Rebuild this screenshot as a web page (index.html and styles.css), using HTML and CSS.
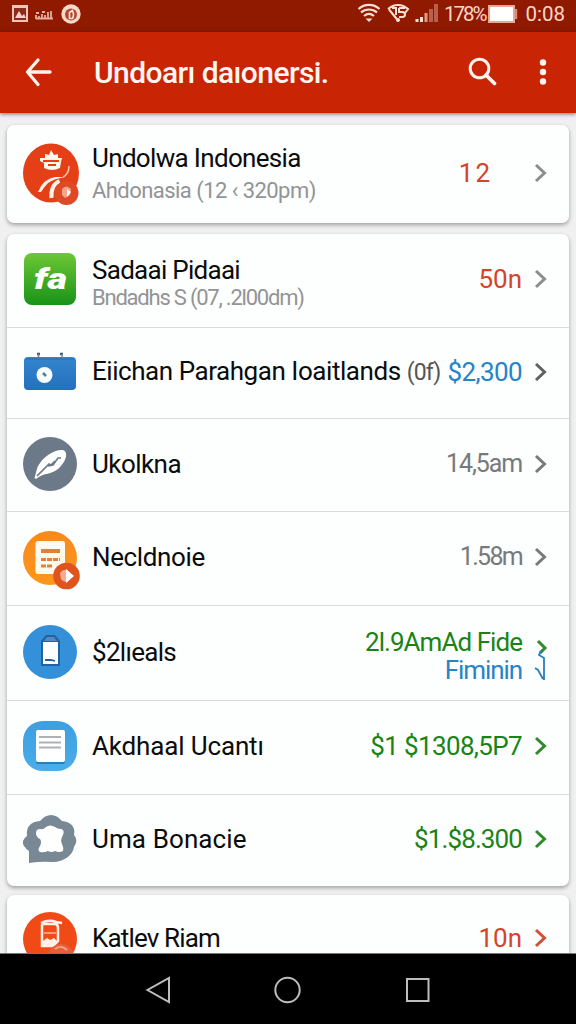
FILE: index.html
```html
<!DOCTYPE html>
<html lang="id">
<head>
<meta charset="utf-8">
<title>Undoarı daıonersi.</title>
<link rel="stylesheet" href="styles.css">
</head>
<body>
<div class="screen">
  <div class="status">
    <svg class="status-left" width="84" height="32" viewBox="0 0 84 32">
      <rect x="12" y="5" width="16" height="17" fill="#f2c4b9"/>
      <rect x="14" y="8" width="12" height="12" fill="#8a2a1a"/>
      <path d="M15 18l4-7 3 5 2-2 2 4z" fill="#f5cfc5"/>
      <path d="M36 19v-4m3 4v-3m3 3v-5m3 5v-4m3 4v-7m3 7v-8M36 13h3m3-1h3M36 18.500h17" stroke="#e6ac9e" stroke-width="1.800" fill="none"/>
      <circle cx="71" cy="14" r="9.700" fill="#f6d9c6"/>
      <circle cx="71" cy="14.500" r="6" fill="#b34932"/>
      <path d="M69.500 18.500v-6l3-2q2 5 0 8z" stroke="#fbe6d8" stroke-width="1.600" fill="none"/>
    </svg>
    <div class="status-right">
      <svg width="84" height="32" viewBox="0 0 84 32" fill="none" stroke="#ffdfd3">
        <path d="M1.500 9c6-5.500 15-5.500 21 0M4 12.500c4.500-4 11.500-4 16 0M7 16c3-2.500 7-2.500 10 0" stroke-width="2.200"/>
        <path d="M8.500 18.500h7l-3.500 3.500z" fill="#ffdfd3" stroke="none"/>
        <path d="M31 9c6-5.500 14-5.500 20 0l-3 4M32 9.500l9 11M35 8h4v7m3-7h6M42 8v4h3c4 0 4 5 0 5h-3" stroke-width="2"/>
        <circle cx="41" cy="20" r="2" fill="#ffdfd3" stroke="none"/>
        <path d="M60 22v-3m4.500 3v-5" stroke-width="3"/>
        <path d="M69 22v-9" stroke-width="3" stroke="#e39b87"/>
        <path d="M74 22v-13m5 13v-18" stroke-width="4" stroke="#b9604c"/>
      </svg>
      <span class="battery-text">178%</span>
      <svg class="battery" width="30" height="18" viewBox="0 0 30 18"><rect x="1" y="1" width="25" height="16" fill="#fff" stroke="#e8a898" stroke-width="2"/><path d="M28 4v10" stroke="#d98b78" stroke-width="2.500"/></svg>
      <span class="clock">0:08</span>
    </div>
  </div>
  <header class="bar">
    <svg class="back" width="28" height="30" viewBox="0 0 28 30" fill="none" stroke="#fff3ed" stroke-width="3.300" stroke-linecap="round" stroke-linejoin="round"><path d="M13 3L2.500 15 13 27.500M3 15h22"/></svg>
    <h1 class="title">Undoarı daıonersi.</h1>
    <svg class="search" width="30" height="30" viewBox="0 0 30 30" fill="none" stroke="#fff3ed" stroke-width="3"><circle cx="11.500" cy="11.500" r="9.300"/><path d="M18 18l8.500 8.500" stroke-width="3.800" stroke-linecap="round"/></svg>
    <svg class="more" width="8" height="28" viewBox="0 0 8 28" fill="#fff3ed"><circle cx="4" cy="4.500" r="3.200"/><circle cx="4" cy="14" r="3.200"/><circle cx="4" cy="23.500" r="3.200"/></svg>
  </header>
  <main class="list">
    <section class="card">
      <div class="row h98">
        <svg class="icon i1" width="60" height="68" viewBox="0 0 60 68">
          <ellipse cx="28" cy="32" rx="28" ry="29.500" fill="#e43f17"/>
          <path d="M17 17h5v-4l4 1 2-5 3 5 4-1v4h4l-1 4-1 6q-8 4-16 0v-5l-4-2z" fill="#fff6ef"/><path d="M20 20h16M25 24h8" stroke="#e43f17" stroke-width="2"/>
          <path d="M15 51q5-13 17-15h10q-12 2-17 6-4 4-7 9z" fill="#fff3e9"/><path d="M28.500 57q-1-13 8-17" fill="none" stroke="#fff3e9" stroke-width="4"/><path d="M46 25q0 8-6 11" fill="none" stroke="#ffc9b3" stroke-width="1.500"/>
          <circle cx="43.500" cy="52" r="12" fill="#df4925"/><path d="M39 48q4-5 9 0l-1 6-5 3-3-3z" fill="#f6a48a"/><path d="M44 48l4 3-4 5z" fill="#fff"/>
        </svg>
        <div class="copy c1"><div class="name n1">Undolwa Indonesia</div><div class="sub s1">Ahdonasia (12 ‹ 320pm)</div></div>
        <div class="value red v1">12</div>
        <svg class="chev grey" viewBox="0 0 14 20"><path d="M2 2l8.500 8L2 18"/></svg>
      </div>
    </section>
    <section class="card">
      <div class="row h94">
        <svg class="icon" width="60" height="56" viewBox="0 0 60 56">
          <defs><linearGradient id="leaf" x2="0" y2="1"><stop stop-color="#6dc735"/><stop offset="1" stop-color="#189318"/></linearGradient></defs>
          <rect x="1" y="2" width="52" height="52" rx="8" fill="url(#leaf)"/>
          <text x="11" y="38" class="logo-text" textLength="33" lengthAdjust="spacingAndGlyphs">fa</text>
        </svg>
        <div class="copy tight"><div class="name n2">Sadaai Pidaai</div><div class="sub s2">Bndadhs S (07, .2l00dm)</div></div>
        <div class="value red v2">50n</div>
        <svg class="chev grey" viewBox="0 0 14 20"><path d="M2 2l8.500 8L2 18"/></svg>
      </div>
      <div class="row h91">
        <svg class="icon" width="60" height="40" viewBox="0 0 60 40">
          <defs><linearGradient id="case" x2="0" y2="1"><stop stop-color="#3485ce"/><stop offset="1" stop-color="#2470bd"/></linearGradient></defs>
          <path d="M14 2h3M37 2h3" stroke="#405a70" stroke-width="2.500"/><path d="M15.500 2v4M39 2v4" stroke="#6f8ba2" stroke-width="1.500"/>
          <rect x="1" y="5" width="52" height="33" rx="4" fill="url(#case)"/><path d="M3 7h48" stroke="#286fb0"/>
          <circle cx="21.500" cy="23" r="8" fill="#f7fcff"/><path d="M20 21l3 3" stroke="#4c7fa4" stroke-width="2.500"/>
        </svg>
        <div class="copy"><div class="name n3">Eiichan Parahgan Ioaitlands <span class="count">(0f)</span></div></div>
        <div class="value blue v3">$2,300</div>
        <svg class="chev dark" viewBox="0 0 14 20"><path d="M2 2l8.500 8L2 18"/></svg>
      </div>
      <div class="row h93">
        <svg class="icon" width="60" height="56" viewBox="0 0 60 56">
          <circle cx="27" cy="28" r="27" fill="#6c7988"/>
          <path d="M11.500 42l3-11C20 20 32 13 40 14c6 2 3 12-5 19-7 6-13 3-22 10z" fill="#fff"/>
          <path d="M14 40L26 28l2 1 4-4M25 30l5-1 5-7h3" stroke="#6c7988" stroke-width="1.700" fill="none"/>
        </svg>
        <div class="copy"><div class="name n4">Ukolkna</div></div>
        <div class="value muted v4">14,5am</div>
        <svg class="chev mid" viewBox="0 0 14 20"><path d="M2 2l8.500 8L2 18"/></svg>
      </div>
      <div class="row h94">
        <svg class="icon i5" width="60" height="60" viewBox="0 0 60 60">
          <defs><linearGradient id="sun" x2="0" y2="1"><stop stop-color="#f58a1d"/><stop offset="1" stop-color="#ff961c"/></linearGradient></defs>
          <circle cx="27" cy="28" r="27" fill="url(#sun)"/><rect x="12.500" y="11" width="29.500" height="33" rx="2.500" fill="#fffaf0"/>
          <path d="M18 21h19" stroke="#e08136" stroke-width="4"/><path d="M18 29.500h19M18 36h12" stroke="#e08136" stroke-width="2.800" stroke-dasharray="5 1"/>
          <circle cx="43.500" cy="46" r="13.300" fill="#df531d"/><path d="M37 43q3-4 7-3v12q-4 0-6-3z" fill="#f5ad92"/><path d="M43 39l8 7-8 7z" fill="#fff"/>
        </svg>
        <div class="copy"><div class="name n5">Necldnoie</div></div>
        <div class="value muted v5">1.58m</div>
        <svg class="chev mid" viewBox="0 0 14 20"><path d="M2 2l8.500 8L2 18"/></svg>
      </div>
      <div class="row h95">
        <svg class="icon" width="60" height="56" viewBox="0 0 60 56">
          <circle cx="27" cy="28" r="27" fill="#3490d9"/>
          <path d="M18 17l5-6h9l5 6v25H18z" fill="#1e62a8"/><path d="M21 17l3-4h7l3 4z" fill="#5689ba"/><rect x="20" y="18" width="15" height="22" fill="#fff"/><path d="M22 36h6l4 1" stroke="#245e94" stroke-width="1.800" fill="none"/>
        </svg>
        <div class="copy"><div class="name n6">$2lıeals</div></div>
        <div class="value double"><div class="green v6">2l.9AmAd Fide</div><div class="blue v6b">Fiminin</div></div>
        <svg class="chev-pair" width="20" height="42" viewBox="0 0 20 42" fill="none"><path d="M4 2l7 7-5 5" stroke="#318a2b" stroke-width="3"/><path d="M7 12l-2 4 5 3v22M1 29l3 2 5 9" stroke="#277fc3" stroke-width="1.800"/></svg>
      </div>
      <div class="row h94">
        <svg class="icon" width="60" height="52" viewBox="0 0 60 52">
          <defs><linearGradient id="note" x2="0" y2="1"><stop stop-color="#3b9fe0"/><stop offset="1" stop-color="#4baee9"/></linearGradient></defs>
          <rect x="0" y="1" width="54" height="50" rx="20" fill="url(#note)"/><rect x="13" y="11" width="29" height="33" rx="2" fill="#287eb8"/><rect x="13" y="10" width="29" height="32" rx="2" fill="#fff"/>
          <path d="M16 17h22M16 22.500h22M16 27.500h22" stroke="#adb2b6" stroke-width="1.800"/>
        </svg>
        <div class="copy"><div class="name n7">Akdhaal Ucantı</div></div>
        <div class="value green v7">$1 $1308,5P7</div>
        <svg class="chev go" viewBox="0 0 14 20"><path d="M2 2l8.500 8L2 18"/></svg>
      </div>
      <div class="row h91">
        <svg class="icon" width="60" height="50" viewBox="0 0 60 50">
          <path d="M6 49V37Q-1 32 0 27q1-3 4-5C3 12 8 8 17 7q5-6 11-6 6 0 11 6c8 1 14 5 12 14q3 3 2 8l-2 4c-1 8-10 15-21 15Q18 47 6 49z" fill="#788895"/>
          <path d="M13 19q0-4 4-4 3 1 6-2 4-3 9 0 2 2 6 2 4 1 2 6-3 5-1 9 2 4 1 7-4 2-8 0-4 2-7 0-4 2-8 1-3-2 0-6 2-4 0-7-4-2-4-6z" fill="#fff"/>
        </svg>
        <div class="copy"><div class="name n8">Uma Bonacie</div></div>
        <div class="value green v8">$1.$8.300</div>
        <svg class="chev go" viewBox="0 0 14 20"><path d="M2 2l8.500 8L2 18"/></svg>
      </div>
    </section>
    <section class="card">
      <div class="row h88">
        <svg class="icon i9" width="60" height="56" viewBox="0 0 60 56">
          <circle cx="27" cy="28" r="27" fill="#f04b17"/><path d="M18 12q8-4 15-1l6 1M20 13h12q3 0 3 4v13l-5 5H19V14z" fill="none" stroke="#fff1e8" stroke-width="2.500"/><path d="M21 22h12" stroke="#ffb89e" stroke-width="1.500"/><path d="M20 30l4-3 3 2 4-2 3 3-5 5h-9z" fill="#fff1e8"/>
          <circle cx="38" cy="46" r="13" fill="#e7603b"/><path d="M32 38q6-5 12 1" stroke="#f7a286" stroke-width="2" fill="none"/>
        </svg>
        <div class="copy"><div class="name n9">Katlev Riam</div></div>
        <div class="value red v9">10n</div>
        <svg class="chev rust" viewBox="0 0 14 20"><path d="M2 2l8.500 8L2 18"/></svg>
      </div>
    </section>
  </main>
  <nav class="nav">
    <svg width="26" height="28" viewBox="0 0 26 28"><path d="M24 2v24L2.500 14z"/></svg>
    <svg width="28" height="28" viewBox="0 0 28 28"><circle cx="13.500" cy="14" r="12.200"/></svg>
    <svg width="26" height="28" viewBox="0 0 26 28"><rect x="2" y="3" width="21.500" height="22"/></svg>
  </nav>
</div>
</body>
</html>
```

FILE: styles.css
```css
* { box-sizing: border-box; }
body { margin: 0; font-family: Roboto, "Liberation Sans", sans-serif; }
svg { display: block; flex: none; }
.screen { width: 576px; height: 1024px; display: flex; flex-direction: column; overflow: hidden; background: #f0f0f1; }
.status { height: 32px; flex: none; background: #8f1a00; display: flex; justify-content: space-between; color: #ffd5c8; padding-right: 11px; }
.status-right { display: flex; align-items: center; font-size: 20.500px; line-height: 30px; height: 28px; }
.status-right > svg:first-child { align-self: flex-start; }
.battery-text { width: 43px; margin-left: 3px; letter-spacing: -2px; }
.battery { margin-left: 1px; }
.clock { width: 42px; margin-left: 5px; text-align: right; }
.bar { height: 81px; flex: none; display: flex; align-items: center; background: #c92504; padding: 0 29px 2px 25px; box-shadow: 0 1px 4px #0008; z-index: 1; }
.title { margin: 2px 0 0 41px; flex: 1; color: #fff6f2; font-size: 30px; font-weight: 500; line-height: 40px; white-space: nowrap; letter-spacing: -.58px; }
.search { margin-right: 41px; }
.list { flex: 1; min-height: 0; overflow: hidden; padding: 12px 7px 0; display: flex; flex-direction: column; gap: 10px; }
.card { flex: none; background: #fdfefe; border-radius: 7px; box-shadow: 0 2px 4px #0005; overflow: hidden; }
.card:nth-child(2) { margin-top: 1px; margin-bottom: -1px; }
.row { display: flex; align-items: center; padding: 0 21px 3px 16px; border-bottom: 1px solid #d9dbdc; }
.row:last-child { border-bottom: 0; }
.h88 { height: 88px; } .h91 { height: 91px; } .h93 { height: 93px; }
.h94 { height: 94px; } .h95 { height: 95px; } .h98 { height: 98px; }
.icon { margin-right: 9px; overflow: visible; }
.i1 { margin-top: 5px; }
.i5 { margin-top: 5px; }
.i9 { margin-top: 3px; }
.copy { flex: 1; min-width: 0; white-space: nowrap; }
.c1 { padding-top: 5px; }
.tight { padding-top: 5px; }
.name { font-size: 26px; line-height: 32px; color: #0b0c0c; }
.sub { font-size: 22px; line-height: 34px; color: #929495; }
.tight .sub { line-height: 24px; }
.n1 { letter-spacing: -.67px; }
.s1 { letter-spacing: -.55px; }
.n2 { letter-spacing: -.72px; }
.s2 { letter-spacing: -1.22px; }
.n3 { letter-spacing: -.45px; }
.count { color: #555; font-size: 23px; letter-spacing: -.8px; }
.n4 { letter-spacing: -.55px; }
.n5 { letter-spacing: -.38px; }
.n6 { letter-spacing: -.7px; }
.n7 { letter-spacing: -.15px; }
.n8 { letter-spacing: .1px; }
.n9 { letter-spacing: -.85px; }
.value { font-size: 26px; line-height: 32px; white-space: nowrap; margin-right: 12px; text-align: right; }
.red { color: #d3442b; }
.blue { color: #2584c9; }
.green { color: #198415; }
.muted { color: #777a7c; }
.v1 { margin-right: 42px; letter-spacing: 2px; }
.v3 { letter-spacing: -.6px; }
.v4 { font-size: 25px; letter-spacing: -1.1px; }
.v5 { font-size: 25px; letter-spacing: -1.7px; }
.v6 { letter-spacing: -.95px; }
.v6b { letter-spacing: -1.1px; }
.v7 { letter-spacing: -.65px; }
.v8 { letter-spacing: -.9px; }
.double { line-height: 28px; padding-top: 8px; }
.chev { width: 14px; height: 20px; fill: none; stroke: currentColor; stroke-width: 3; }
.grey { color: #8b8d8e; } .dark { color: #5e6061; } .mid { color: #777a7b; } .go { color: #2e8b2a; } .rust { color: #d05031; }
.chev-pair { margin-right: -6px; margin-top: 16px; }
.logo-text { font: italic 900 29px Roboto, sans-serif; fill: #fff; }
.nav { height: 71px; flex: none; background: #000; border-top: 1px solid #777; display: flex; justify-content: center; align-items: center; gap: 103px; padding-top: 2px; }
.nav svg { fill: none; stroke: #bdbdbd; stroke-width: 2; }
```
